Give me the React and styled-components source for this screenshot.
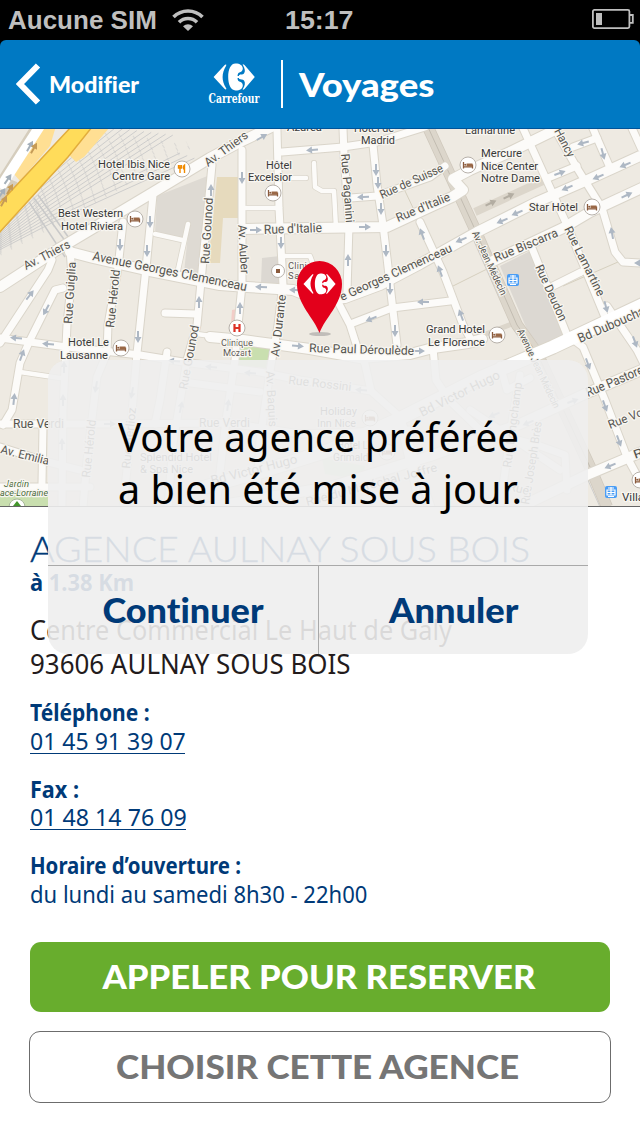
import React from "react";
import styled, { createGlobalStyle } from "styled-components";

const GlobalStyle = createGlobalStyle`
  * { box-sizing: border-box; }
  body { margin: 0; background: #fff; }
`;

const navy = "#003a78";
const rounded = `"Lato", "Open Sans", sans-serif`;
const humanist = `"Noto Sans", "Open Sans", sans-serif`;

const Screen = styled.div`
  position: relative;
  width: 640px;
  height: 1136px;
  background: #fff;
  overflow: hidden;
  display: flex;
  flex-direction: column;
`;

const Fit = styled.span`
  display: inline-block;
  white-space: nowrap;
  font-variant-ligatures: none;
  transform: scaleX(${(p) => p.$sx || 1});
  transform-origin: ${(p) => p.$origin || "left"} center;
`;

const StatusBar = styled.div`
  display: grid;
  grid-template-columns: 1fr auto 1fr;
  align-items: center;
  height: 40px;
  padding: 0 6px 0 8px;
  background: #000;
  color: #bfbfbf;
  font: bold 26px/40px "Liberation Sans", sans-serif;
`;

const Carrier = styled.div`
  display: flex;
  align-items: center;
  gap: 15px;
`;

const Clock = styled.div`
  padding-right: 4px;
`;

const Battery = styled.div`
  display: flex;
  justify-content: flex-end;
  padding-bottom: 2px;
`;

const HeaderWrap = styled.div`
  background: #000;
`;

const Header = styled.header`
  display: flex;
  align-items: center;
  height: 89px;
  padding: 0 0 0 16px;
  border-radius: 6px 6px 0 0;
  border-bottom: 1px solid #00549a;
  background: #0079c3;
  color: #fff;
  font-family: ${rounded};
`;

const Back = styled.div`
  display: flex;
  align-items: center;
  gap: 8px;
  width: 191px;
  font-size: 23px;
  font-weight: 900;
`;

const Brand = styled.div`
  display: flex;
  flex-direction: column;
  align-items: center;
  width: 53px;
  gap: 1px;
  font: bold 12px/14px "DejaVu Serif", serif;
`;

const Divider = styled.div`
  width: 2px;
  height: 48px;
  margin: 0 16px 0 21px;
  background: #fff;
`;

const Title = styled.div`
  font-size: 33px;
  font-weight: 900;
`;

const MapFrame = styled.div`
  height: 378px;
  border-bottom: 1px solid #666;
  svg { display: block; }
`;

const Details = styled.main`
  display: flex;
  flex-direction: column;
  padding: 21px 30px 0;
  color: ${navy};
  font-family: ${humanist};
`;

const AgencyName = styled.h1`
  margin: 0;
  font: 300 36px/41px ${rounded};
  -webkit-text-stroke: 0.4px ${navy};
`;

const Distance = styled.div`
  height: 27px;
  font-size: 24px;
  font-weight: 700;
  line-height: 26px;
`;

const Address = styled.div`
  margin-top: 17px;
  color: #231b1c;
  font-size: 27px;
  line-height: 34px;
`;

const Contact = styled.div`
  display: flex;
  flex-direction: column;
  align-items: flex-start;
  height: 76.5px;
  font-size: 24px;
  line-height: 28.5px;
`;

const Contacts = styled.div`
  display: flex;
  flex-direction: column;
  margin-top: 17px;
`;

const ContactLabel = styled.div`
  font-weight: 700;
`;

const Phone = styled.div`
  width: ${(p) => p.$w}px;
  height: 27px;
  line-height: 27px;
  border-bottom: 1.5px solid ${navy};
`;

const Actions = styled.div`
  display: flex;
  flex-direction: column;
  gap: 19px;
  padding: 14px 29px 0;
`;

const ActionButton = styled.button`
  display: flex;
  align-items: center;
  justify-content: center;
  height: ${(p) => (p.$primary ? 70 : 72)}px;
  margin: ${(p) => (p.$primary ? "0 1px" : 0)};
  padding: 0 ${(p) => (p.$primary ? 3 : 5)}px 2px 0;
  border: ${(p) => (p.$primary ? "0" : "1px solid #6c6c6c")};
  border-radius: 11px;
  background: ${(p) => (p.$primary ? "#68ad2d" : "#fff")};
  color: ${(p) => (p.$primary ? "#fff" : "#757575")};
  font: 900 33px/40px ${rounded};
`;

const Dialog = styled.div`
  position: absolute;
  left: 48px;
  top: 360px;
  width: 540px;
  height: 294px;
  display: flex;
  flex-direction: column;
  border-radius: 20px;
  background: rgba(238, 238, 238, 0.9);
  overflow: hidden;
`;

const Message = styled.div`
  height: 206px;
  padding: 51px 0 0 70px;
  border-bottom: 1px solid #a9a9a9;
  color: #000;
  font: 40px/52px ${humanist};
`;

const Choices = styled.div`
  display: grid;
  grid-template-columns: 271px 1fr;
  flex: 1;
`;

const Choice = styled.div`
  display: flex;
  align-items: center;
  justify-content: center;
  border-right: ${(p) => (p.$divided ? "1px solid #a9a9a9" : "0")};
  color: ${navy};
  font: 900 34px/40px ${rounded};
`;

const WifiIcon = () => (
  <svg width="32" height="24" viewBox="0 0 32 24" fill="none" stroke="#bfbfbf" strokeWidth="3.6">
    <path d="M1.5 9C9.5 .9 22.5 .9 30.500 9" />
    <path d="M7 14.200C12 9.200 20 9.200 25 14.200" />
    <path d="M16 23L11 18.200C14 15.500 18 15.500 21 18.200Z" fill="#bfbfbf" stroke="none" />
  </svg>
);

const BatteryIcon = () => (
  <svg width="42" height="20" viewBox="0 0 42 20" fill="none" stroke="#bfbfbf" strokeWidth="1.800">
    <rect x=".9" y=".9" width="36.500" height="18.200" rx="1.500" />
    <path d="M37.500 6H40.800V13.800H37.500" />
    <rect x="4" y="4" width="6" height="12" fill="#bfbfbf" stroke="none" />
  </svg>
);

const LogoShape = () => (
  <g fill="#fff">
    <path d="M.6 14L11.500 2.200C12.600 1 14 1.600 13 3C8.500 10 8.500 18 13 25C14 26.400 12.600 27 11.500 25.800Z" />
    <path d="M22.500 .6C27 .6 29.800 2.600 29.800 5.600C29.800 7.600 28.600 8.800 27 9.200C25.200 9.600 24.500 10.600 24.500 14C24.500 17.400 25.200 18.400 27 18.800C28.600 19.200 29.800 20.400 29.800 22.400C29.800 25.400 27 27.400 22.500 27.400C17.500 27.400 15.200 21 15.200 14C15.200 7 17.500 .6 22.500 .6Z" />
    <path d="M30 2.200C29.200 1 30.300 .8 31.500 2L41.800 14L31.500 26C30.300 27.200 29.200 27 30 25.800C32 22.500 32.500 19.500 31 17.500C30 16.200 27.500 17 26 15.800V12.200C27.500 11 30 11.800 31 10.500C32.500 8.500 32 5.500 30 2.200Z" />
    <path d="M23.500 13H28V15H23.500Z" />
  </g>
);

const thin = [
  "282,152 343,147 377,142 425,127", "350,198 377,196 430,177 445,166",
  "343,128 344,155 349,225 347,292", "373,145 377,185 383,225 387,258 392,302 397,345",
  "277,130 279,208 283,285 278,325 271,365 260,440 256,507", "242,150 242,285 238,325 235,360 226,420 216,507",
  "337,300 350,325 357,347 365,364 371,391 400,417 431,507", "353,323 392,308 450,301",
  "0,338 67,347 140,355 183,362 260,372 300,380 371,391",
  "420,222 443,272 463,325 470,338", "212,165 203,260 197,325 187,360 173,443 168,507",
  "123,222 118,268 108,325 107,353 97,377 87,460 83,507",
  "153,195 147,258 140,325 137,353 128,460 123,507",
  "70,250 72,275 67,325 63,410 62,507", "52,260 48,270 10,328 0,343",
  "63,288 55,290 40,320 30,340 20,363 12,410 3,425",
  "0,424 105,424 230,423 300,434 410,430",
  "0,447 48,462 80,470", "43,427 42,483", "0,487 90,487",
  "553,126 577,168 602,208 615,252 623,262 640,263",
  "522,126 567,225 607,322", "532,248 567,335 583,347 605,400 627,457 640,481",
  "573,147 597,138", "592,126 597,138 611,170", "631,126 641,148",
  "548,178 577,166", "553,286 581,272", "607,306 637,350 643,362",
  "433,348 436,380 450,401 480,430 540,446 565,455 567,490",
  "500,365 507,390 530,378", "520,375 513,415 500,507", "470,410 560,470", "400,420 420,507",
  "167,352 160,400 155,424", "183,382 260,392",
  "165,313 196,314",
];
const narrow = [
  "155,234 182,240", "188,224 178,270", "246,208 278,208", "285,256 310,256 313,264 313,280",
  "314,163 315,187 322,191 334,191 336,228", "290,178 306,178", "20,372 60,378", "197,334 225,338",
];
const medium = [
  "0,287 60,248 152,193 210,158 240,142 284,121",
  "70,252 93,258 150,271 220,285 247,287 293,290 318,300 345,298 380,285 420,264 477,232 537,202 583,182 640,156",
  "245,229 387,227 430,207 452,197 463,190 453,179 470,170 510,152 555,130",
  "210,337 243,340 310,349 360,358 410,354 433,348 468,343 482,339",
  "493,261 563,228 590,212 644,187", "430,456 520,424 587,393 644,369",
  "520,507 587,475 644,451", "210,507 330,487 430,456",
];
const wide = ["205,487 260,472 330,450 397,420 480,378 553,347 644,304"];

const arrows = [
  [262,137,-30],[312,150,175],[242,178,90],[376,170,90],[378,183,90],[381,209,90],[363,197,178],
  [365,227,0],[256,230,0],[281,243,90],[386,251,90],[348,260,-90],[390,289,90],[261,287,183],[295,290,183],
  [371,319,157],[395,331,90],[298,346,5],[419,351,0],[423,302,180],[440,271,-110],[422,234,-110],
  [461,315,-110],[461,240,157],[502,221,157],[517,213,157],[567,188,157],[598,177,157],[625,165,157],[583,143,165],[560,173,-20],
  [603,154,75],[612,233,-100],[627,195,-25],[606,307,75],[588,364,70],[605,406,70],[619,441,70],
  [635,342,70],[610,466,157],[640,263,180],[150,222,90],[147,251,90],[120,245,90],[211,190,-90],[199,302,-90],
  [30,295,-52],[46,310,118],[16,338,184],[48,344,184],[22,355,-70],[14,399,-84],[138,337,90],[240,308,-90],
  [64,367,-90],[63,400,-90],[62,444,-90],[96,387,100],[132,393,100],[181,407,-78],[110,424,0],[174,361,184],
  [211,367,184],[250,373,184],[228,405,-82],[361,390,184],[422,178,-25],[494,415,157],[573,401,-20],
  [528,423,157],[540,516,157],
];
const darkArrows = [[491,203,-25],[509,196,-25]];

const hotels = [[135,219],[273,193],[468,165],[592,207],[121,348],[497,335],[370,418],[387,452],[640,480]];

// Each label runs along the segment from (x1, y1) to (x2, y2).
const streets = [
  ["Av. Thiers",208,167,249,137,12],["Av. Thiers",26,270,71,247,12],
  ["Avenue Georges Clemenceau",92,260,246,291,13],["Rue Gounod",209,264,213,198,12],
  ["Rue Guiglia",72,324,76,262,12],["Rue Hérold",114,328,120,270,12],
  ["Av. Auber",238,225,241,274,12],["Av. Durante",279,357,286,295,12],
  ["Rue Paganini",341,154,346,223,12],["Rue d'Italie",264,234,322,232,13],
  ["Rue de Suisse",382,199,444,171,12],["Rue d'Italie",398,222,451,200,12],
  ["e Georges Clemenceau",342,301,453,251,12],["Av. Jean Médecin",472,233,501,296,10],
  ["Rue Biscarra",496,262,559,236,12.5],["Rue Lamartine",564,229,598,297,12],
  ["Rue Deudon",535,267,560,322,12],["Hancy",554,131,568,158,12],
  ["Bd Dubouchage",580,343,658,309,13],["Rue Pastorelli",588,397,652,370,13],
  ["Rue Voltaire",610,429,668,406,12],["Rue",635,459,660,450,12],
  ["Rue Paul Déroulède",309,352,414,355,12],["Avenue Jean Médecin",517,331,554,409,10],
  ["Rue Gounod",187,390,199,326,12],["Rue Verdi",13,428,64,428,12],
  ["Av. Emilia",0,453,48,465,12],["Rue Hérold",90,478,96,420,12],
  ["Rue Berlioz",130,469,136,408,12],["Av. Baquis",266,371,269,427,12],
  ["Rue Rossini",288,384,351,391,12],["Rue Verdi",199,427,250,427,12],
  ["Bd Victor Hugo",212,485,298,463,13],["Bd Victor Hugo",422,417,501,378,13],
  ["Rue Longchamp",511,468,522,383,12],["Rue Joseph Brès",529,505,542,422,12],
  ["Rue du Maréchal Joffre",307,506,438,471,12],["Rue",508,490,528,495,12],
];
const places = [
  ["Hotel Ibis Nice",98,168,72],["Centre Gare",112,180,58],["Best Western",58,217,65],["Hotel Riviera",61,230,62],
  ["Hôtel",266,169,26],["Excelsior",248,181,44],["Azurea",287,131,35],["Hôtel de",354,132,40],["Madrid",361,144,34],
  ["Lamartine",465,134,50],["Mercure",481,157,41],["Nice Center",481,170,57],["Notre Dame",481,182,59],
  ["Star Hôtel",529,211,49],["Hotel Le",68,346,41],["Lausanne",60,359,48],["Grand Hotel",426,333,59],
  ["Le Florence",428,346,57],["Holiday",320,415,37],["Inn Nice",317,427,39],["Hotel Le",337,449,36],
  ["Grimaldi",333,461,38],["Splendid Hotel",140,461,72],["& Spa Nice",140,473,53],["Villa",622,501,22],
];

const Road = ({ lines, width, color }) =>
  lines.map((points) => (
    <polyline key={points} points={points} fill="none" stroke={color} strokeWidth={width} strokeLinejoin="round" strokeLinecap="round" />
  ));

const StreetLabel = ({ d }) => {
  const [text, x1, y1, x2, y2, size] = d;
  const angle = (Math.atan2(y2 - y1, x2 - x1) * 180) / Math.PI;
  return (
    <text transform={`translate(${x1} ${y1}) rotate(${angle})`} fontSize={size} textLength={Math.hypot(x2 - x1, y2 - y1)} lengthAdjust="spacingAndGlyphs">
      {text}
    </text>
  );
};

const Arrow = ({ a, color }) => (
  <path d="M-6-1H0V-3.500L6 0L0 3.500V1H-6Z" fill={color} transform={`translate(${a[0]} ${a[1]}) rotate(${a[2]})`} />
);

const Tram = ({ x, y }) => (
  <g transform={`translate(${x} ${y})`}>
    <rect x="-6" y="-6" width="12" height="12" rx="2" fill="#4a9df5" />
    <path d="M-4-2H4V3H-4ZM0-5V3M-4 .5H4M-3-4H3M-3 4.500H3" fill="none" stroke="#fff" strokeWidth="1.200" />
  </g>
);

const rails = Array.from({ length: 13 }, (_, i) => i);

const CityMap = () => (
  <svg width="640" height="377" viewBox="0 129 640 377" fontFamily="Roboto, sans-serif">
    <rect y="129" width="640" height="377" fill="#eeeae2" />
    <path d="M157 196L210 175L200 275L184 273L189 224L183 238L155 233Z" fill="#dedad3" />
    <path d="M217 177H238V218H223L220 263L208 263L213 218Z" fill="#e6dabd" />
    <path d="M262 258L280 256L281 284L261 283Z" fill="#dcd8d2" />
    <path d="M500 266L530 251L567 337L537 353Z" fill="#dcd8d2" />
    <path d="M240 344L271 348L266 368L236 366Z" fill="#c9dfaf" />
    <path d="M232 310L237 309L236 322L231 324Z" fill="#f2cdc8" />
    <path d="M322 458L365 466L362 480L325 474Z" fill="#d7e5c5" />
    <path d="M0 491L48 490V507H0Z" fill="#c9dfaf" />
    <g stroke="#c9c9c9" strokeWidth=".9" fill="none">
      {rails.map((i) => (
        <path key={i} d={`M0 ${228 + i * 1.8}L${38 + i * 1.3} ${186 + i * 3}L${108 + i * 7.200} ${127 + i * (i > 9 ? 2.600 : 0.900)}`} />
      ))}
      {rails.map((i) => (
        <path key={i} strokeDasharray="1 11" strokeWidth="4" opacity=".5" d={`M0 ${232 + i * 1.8}L${40 + i * 1.3} ${188 + i * 3}L${110 + i * 7} ${130 + i * 1.2}`} />
      ))}
      <path d="M29 202L65 257M34 198L71 249M38 195L74 245" strokeWidth="1.500" />
      <path d="M591 478L604 507M595 477L608 507M587 478L600 507" />
    </g>
    <path d="M38 126L56 126L50 146L20 181L14 174Z" fill="#ffdf93" />
    <path d="M2 204L12 180M0 186L38 126" stroke="#d5cdbd" strokeWidth="12" />
    <path d="M0 188L40 126" stroke="#fff" strokeWidth="10" />
    <path d="M66 152L76 162L84 157L110 127H85Z" fill="#ffdf93" />
    <path d="M-2 205L71 127H92L68 157L-2 234Z" fill="#ffdc5a" stroke="#e2ad3c" strokeWidth="1.500" />
    <polyline points="475,212 545,180" stroke="#dcd6cb" strokeWidth="8" />
    <polyline points="475,338 512,324" stroke="#dcd6cb" strokeWidth="5" />
    <polyline points="427,125 473,225 517,325 537,353 590,467 607,507" fill="none" stroke="#cfc8bc" strokeWidth="12" />
    <polyline points="427,125 473,225 517,325 537,353 590,467 607,507" fill="none" stroke="#dcd6cb" strokeWidth="10.500" />
    <polyline points="427,125 473,225 517,325 537,353 590,467" fill="none" stroke="#c2bcb1" strokeWidth="1" />
    <path d="M453 286L493 266M563 286L618 262M405 191L415 212" stroke="#d6d0bf" strokeWidth="1" />
    <Road lines={narrow} width={6} color="#dad5ca" />
    <Road lines={thin} width={9} color="#dad5ca" />
    <Road lines={medium} width={12} color="#dad5ca" />
    <Road lines={wide} width={15} color="#dad5ca" />
    <Road lines={narrow} width={4.500} color="#fcfbf9" />
    <Road lines={thin} width={7} color="#fcfbf9" />
    <Road lines={medium} width={10} color="#fcfbf9" />
    <Road lines={wide} width={13} color="#fff" />
    {arrows.map((a, i) => <Arrow key={i} a={a} color="#aeb8c4" />)}
    {darkArrows.map((a, i) => <Arrow key={i} a={a} color="#b3ada2" />)}
    {[[30,146,-60],[8,179,-55],[2,193,-55]].map((a, i) => <Arrow key={i} a={a} color="#a5b0ba" />)}
    {[[34,148,-60],[10,189,-60],[4,201,-60]].map((a, i) => <Arrow key={i} a={a} color="#c69b57" />)}
    <g fill="#55544f" stroke="#f8f6f1" strokeWidth="2.500" paintOrder="stroke" strokeLinejoin="round">
      {streets.map((d, i) => <StreetLabel key={i} d={d} />)}
    </g>
    <g fill="#393939" stroke="#f8f6f1" strokeWidth="2.500" paintOrder="stroke" strokeLinejoin="round" fontSize="11.500">
      {places.map(([t, x, y, w], i) => (
        <text key={i} x={x} y={y} textLength={w} lengthAdjust="spacingAndGlyphs">{t}</text>
      ))}
      <g fill="#5f5b58" fontSize="9.500">
        <text x="288" y="269" textLength="35">Clinique</text>
        <text x="288" y="279" textLength="36">Saint A.</text>
        <text x="221" y="346" textLength="32">Clinique</text>
        <text x="223" y="356" textLength="28">Mozart</text>
      </g>
      <g fill="#4b6b3c" fontSize="9.500" fontStyle="italic">
        <text x="4" y="487" textLength="25">Jardin</text>
        <text x="0" y="496" textLength="48" lengthAdjust="spacingAndGlyphs">ace-Lorraine</text>
      </g>
    </g>
    {hotels.map(([x, y]) => (
      <g key={`${x}-${y}`} transform={`translate(${x} ${y})`}>
        <circle r="8" fill="#fff" stroke="#b7b1aa" strokeWidth="1" />
        <path d="M-4.500-3V3.500M4.500-.5V3.500M-4.500 1.800H4.500" stroke="#8a5a3c" strokeWidth="1.300" />
        <path d="M-1.500-1.500H4.500V1.500H-1.500Z" fill="#9a6846" />
        <circle cx="-2.800" cy="-.3" r="1" fill="#8a5a3c" />
      </g>
    ))}
    <g transform="translate(182 169)">
      <circle r="8" fill="#fff" stroke="#b7b1aa" />
      <path d="M-2-4V4M-3.500-4V-1H-.5V-4M2.500 4V-4C1-3 1 0 2.500 .5" fill="none" stroke="#f08a00" strokeWidth="1.400" />
    </g>
    <g transform="translate(278 271)">
      <circle r="6.500" fill="#fff" stroke="#b7b1aa" />
      <rect x="-2" y="-2" width="4" height="4" fill="#8a5a3c" />
    </g>
    <g transform="translate(237 328)">
      <circle r="8" fill="#fff" stroke="#b7b1aa" />
      <path d="M-2.500-4V4M2.500-4V4M-2.500 0H2.500" stroke="#dc3126" strokeWidth="2.200" />
    </g>
    <g transform="translate(17 507)">
      <circle r="8" fill="#fff" stroke="#a7b797" />
      <path d="M0-6L4-1H-4Z" fill="#42952a" />
    </g>
    <Tram x={513} y={280} />
    <Tram x={611} y={492} />
    <ellipse cx="320" cy="334" rx="11" ry="2" fill="#888" opacity=".45" />
    <path d="M319.500 333C314 318 297 304 297 284A22.500 23 0 0 1 342 284C342 304 325 318 319.500 333Z" fill="#e3001b" />
    <g transform="translate(303 273) scale(.78)"><LogoShape /></g>
  </svg>
);

export default function App() {
  return (
    <Screen>
      <GlobalStyle />
      <StatusBar>
        <Carrier><Fit $sx={1}>Aucune SIM</Fit><WifiIcon /></Carrier>
        <Clock><Fit $sx={1.03} $origin="center">15:17</Fit></Clock>
        <Battery><BatteryIcon /></Battery>
      </StatusBar>
      <HeaderWrap>
        <Header>
          <Back>
            <svg width="25" height="42" viewBox="0 0 25 42" fill="none" stroke="#fff" strokeWidth="6"><path d="M22 2.500L4 21L22 39.500" /></svg>
            <Fit $sx={1.01}>Modifier</Fit>
          </Back>
          <Brand>
            <svg width="42" height="28" viewBox="0 0 42 28"><LogoShape /></svg>
            <Fit $sx={0.77} $origin="center">Carrefour</Fit>
          </Brand>
          <Divider />
          <Title><Fit $sx={1.105}>Voyages</Fit></Title>
        </Header>
      </HeaderWrap>
      <MapFrame><CityMap /></MapFrame>
      <Details>
        <AgencyName><Fit $sx={1.042}>AGENCE AULNAY SOUS BOIS</Fit></AgencyName>
        <Distance><Fit $sx={0.912}>à 1.38 Km</Fit></Distance>
        <Address>
          <div><Fit $sx={0.938}>Centre Commercial Le Haut de Galy</Fit></div>
          <div><Fit $sx={0.96}>93606 AULNAY SOUS BOIS</Fit></div>
        </Address>
        <Contacts>
          <Contact>
            <ContactLabel><Fit $sx={0.876}>Téléphone :</Fit></ContactLabel>
            <Phone $w={155}><Fit $sx={0.96}>01 45 91 39 07</Fit></Phone>
          </Contact>
          <Contact>
            <ContactLabel><Fit $sx={0.9}>Fax :</Fit></ContactLabel>
            <Phone $w={156}><Fit $sx={0.966}>01 48 14 76 09</Fit></Phone>
          </Contact>
          <Contact>
            <ContactLabel><Fit $sx={0.851}>Horaire d’ouverture :</Fit></ContactLabel>
            <Fit $sx={0.918}>du lundi au samedi 8h30 - 22h00</Fit>
          </Contact>
        </Contacts>
      </Details>
      <Actions>
        <ActionButton $primary><Fit $sx={1.051} $origin="center">APPELER POUR RESERVER</Fit></ActionButton>
        <ActionButton><Fit $sx={1.063} $origin="center">CHOISIR CETTE AGENCE</Fit></ActionButton>
      </Actions>
      <Dialog>
        <Message>
          <div><Fit $sx={0.9615}>Votre agence préférée</Fit></div>
          <div><Fit $sx={0.99}>a bien été mise à jour.</Fit></div>
        </Message>
        <Choices>
          <Choice $divided><Fit $sx={1.06} $origin="center">Continuer</Fit></Choice>
          <Choice><Fit $sx={1.066} $origin="center">Annuler</Fit></Choice>
        </Choices>
      </Dialog>
    </Screen>
  );
}
